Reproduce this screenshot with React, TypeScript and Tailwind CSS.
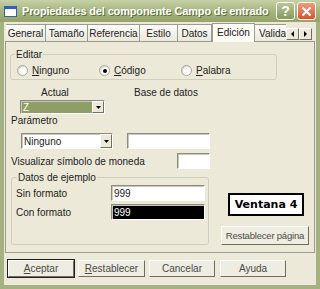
const Radio = ({ label, mn, checked }: { label: string; mn: string; checked?: boolean }) => (
  <div className="flex items-center gap-[4px]">
    <div className="w-[11px] h-[11px] rounded-full border border-[#a7a697] bg-white flex items-center justify-center shadow-[inset_1px_1px_1px_#d8d6c8]">
      {checked && <div className="w-[4px] h-[4px] rounded-full bg-black" />}
    </div>
    <span>
      <span className="underline">{mn}</span>
      {label.slice(mn.length)}
    </span>
  </div>
);

const Sunken = ({ className, children }: { className: string; children?: React.ReactNode }) => (
  <div
    className={
      "border border-t-[#8d8b80] border-l-[#8d8b80] border-b-white border-r-white shadow-[inset_1px_1px_0_#c9c6b5] flex items-center pl-[2px] " +
      className
    }
  >
    {children}
  </div>
);

const Arrow = () => (
  <div className="w-[12px] h-full bg-[#ece9d8] border border-t-white border-l-white border-b-[#716f64] border-r-[#716f64] flex items-center justify-center">
    <svg width="5" height="3" viewBox="0 0 5 3">
      <path d="M0 0h5L2.5 3z" fill="#000" />
    </svg>
  </div>
);

const Btn = ({ label, mn, def, className }: { label: string; mn?: string; def?: boolean; className: string }) => (
  <div
    className={
      "h-[17px] flex items-center justify-center whitespace-nowrap bg-[#efede2] border border-t-white border-l-white border-b-[#6f6d62] border-r-[#6f6d62] text-[#4a4a44] " +
      (def ? "outline outline-1 outline-[#222] " : "") +
      className
    }
  >
    {mn ? (
      <span>
        <span className="underline">{mn}</span>
        {label.slice(mn.length)}
      </span>
    ) : (
      label
    )}
  </div>
);

const tabs = [
  { t: "General", w: "w-[40px]" },
  { t: "Tamaño", w: "w-[42px]" },
  { t: "Referencia", w: "w-[52px]" },
  { t: "Estilo", w: "w-[38px]" },
  { t: "Datos", w: "w-[34px]" },
];

export default function App() {
  return (
    <div className="w-[320px] h-[289px] bg-[#a4b281] flex flex-col font-['Liberation_Sans',Arial,sans-serif] text-[10px] leading-[13px] text-[#222] overflow-hidden">
      {/* title bar */}
      <div className="h-[22px] shrink-0 flex items-center bg-gradient-to-b from-[#c6d1a6] via-[#a7b57f] to-[#94a46a] pl-[4px] pr-[4px]">
        <div className="w-[13px] h-[11px] shrink-0 bg-white border border-[#3a5fa8] border-t-[3px] border-t-[#2d5fd0] mr-[5px]" />
        <span className="flex-1 min-w-0 text-white font-bold text-[11px] tracking-[-0.15px] [text-shadow:1px_1px_0_#5d6b3c] whitespace-nowrap">
          Propiedades del componente Campo de entrado
        </span>
        <div className="shrink-0 flex gap-[2px]">
          <div className="w-[19px] h-[18px] rounded-[3px] border border-white bg-gradient-to-b from-[#b7c594] to-[#869a5b] flex items-center justify-center text-white font-bold text-[14px]">
            ?
          </div>
          <div className="w-[19px] h-[18px] rounded-[3px] border border-white bg-gradient-to-b from-[#f09a7c] to-[#d9502c] flex items-center justify-center">
            <svg width="11" height="11" viewBox="0 0 11 11">
              <path d="M1.5 1.5l8 8M9.5 1.5l-8 8" stroke="#fff" strokeWidth="2.2" />
            </svg>
          </div>
        </div>
      </div>

      {/* body */}
      <div className="flex-1 mx-[4px] mb-[4px] bg-[#ece9d8] flex flex-col">
        {/* tabs */}
        <div className="h-[19px] flex items-end pl-[2px] relative z-10">
          {tabs.map((t) => (
            <div
              key={t.t}
              className={
                "h-[17px] flex items-center justify-center border-t border-r border-[#9a9c8f] bg-gradient-to-b from-[#fbfbf8] to-[#ebe8dc] " +
                t.w
              }
            >
              {t.t}
            </div>
          ))}
          <div className="w-[43px] h-[19px] flex items-center justify-center bg-[#fcfbf6] border-t border-x border-[#9a9c8f] -mb-[1px] pb-[1px]">
            Edición
          </div>
          <div className="w-[31px] h-[17px] flex items-center pl-[4px] whitespace-nowrap border-t border-[#9a9c8f] bg-gradient-to-b from-[#fbfbf8] to-[#ebe8dc]">
            Valida
          </div>
          <div className="flex self-center mt-[4px]">
            {["M3 0v6L0 3z", "M0 0v6l3-3z"].map((d) => (
              <div
                key={d}
                className="w-[13px] h-[12px] bg-[#ece9d8] border border-t-white border-l-white border-b-[#716f64] border-r-[#716f64] flex items-center justify-center"
              >
                <svg width="3" height="6" viewBox="0 0 3 6">
                  <path d={d} fill="#000" />
                </svg>
              </div>
            ))}
          </div>
        </div>

        {/* panel */}
        <div className="ml-[1px] w-[310px] h-[212px] border border-[#9a9c8f] bg-[#ece9d8] flex flex-col">
          <fieldset className="mt-[6px] ml-[4px] w-[267px] border border-[#d0cebf] rounded-[3px] pl-[6px] pt-[3px] pb-[2px]">
            <legend className="ml-[-2px] px-[1px]">Editar</legend>
            <div className="flex h-[13px] items-center">
              <div className="w-[82px]">
                <Radio label="Ninguno" mn="N" />
              </div>
              <div className="w-[82px]">
                <Radio label="Código" mn="C" checked />
              </div>
              <Radio label="Palabra" mn="P" />
            </div>
          </fieldset>

          <div className="mt-[6px] h-[13px] flex">
            <span className="ml-[35px] w-[93px]">Actual</span>
            <span>Base de datos</span>
          </div>

          <Sunken className="mt-[1px] ml-[14px] w-[85px] h-[14px] bg-[#8e9e66] !pl-0">
            <span className="flex-1 pl-[2px] text-white">Z</span>
            <Arrow />
          </Sunken>

          <div className="ml-[5px] h-[13px]">Parámetro</div>

          <div className="mt-[6px] flex">
            <Sunken className="ml-[15px] w-[92px] h-[16px] bg-white !pl-0">
              <span className="flex-1 pl-[2px]">Ninguno</span>
              <Arrow />
            </Sunken>
            <Sunken className="ml-[14px] w-[83px] h-[16px] bg-white" />
          </div>

          <div className="mt-[4px] flex items-center">
            <span className="ml-[5px] w-[166px]">Visualizar símbolo de moneda</span>
            <Sunken className="w-[33px] h-[16px] bg-white" />
          </div>

          <div className="mt-[2px] flex">
            <fieldset className="ml-[5px] w-[198px] border border-[#d0cebf] rounded-[3px] pl-[4px] pb-[2px]">
              <legend className="ml-[1px] px-[1px]">Datos de ejemplo</legend>
              <div className="mt-[1px] flex items-center">
                <span className="w-[95px]">Sin formato</span>
                <Sunken className="w-[94px] h-[16px] bg-white">999</Sunken>
              </div>
              <div className="mt-[3px] flex items-center">
                <span className="w-[95px]">Con formato</span>
                <Sunken className="w-[94px] h-[16px] bg-black text-white">999</Sunken>
              </div>
            </fieldset>
            <div className="ml-[12px] flex flex-col">
              <div className="ml-[7px] mt-[22px] w-[76px] h-[23px] border-2 border-black bg-white flex items-center justify-center font-['DejaVu_Sans',sans-serif] font-bold text-[11px] text-black">
                Ventana 4
              </div>
              <Btn label="Restablecer página" className="mt-[10px] w-[88px] h-[19px] text-[9.5px] tracking-[-0.2px]" />
            </div>
          </div>
        </div>

        {/* buttons */}
        <div className="mt-[7px] flex">
          <Btn label="Aceptar" mn="A" def className="ml-[4px] w-[66px]" />
          <Btn label="Restablecer" mn="R" className="ml-[4px] w-[67px]" />
          <Btn label="Cancelar" className="ml-[4px] w-[66px]" />
          <Btn label="Ayuda" className="ml-[5px] w-[66px]" />
        </div>
      </div>
    </div>
  );
}
